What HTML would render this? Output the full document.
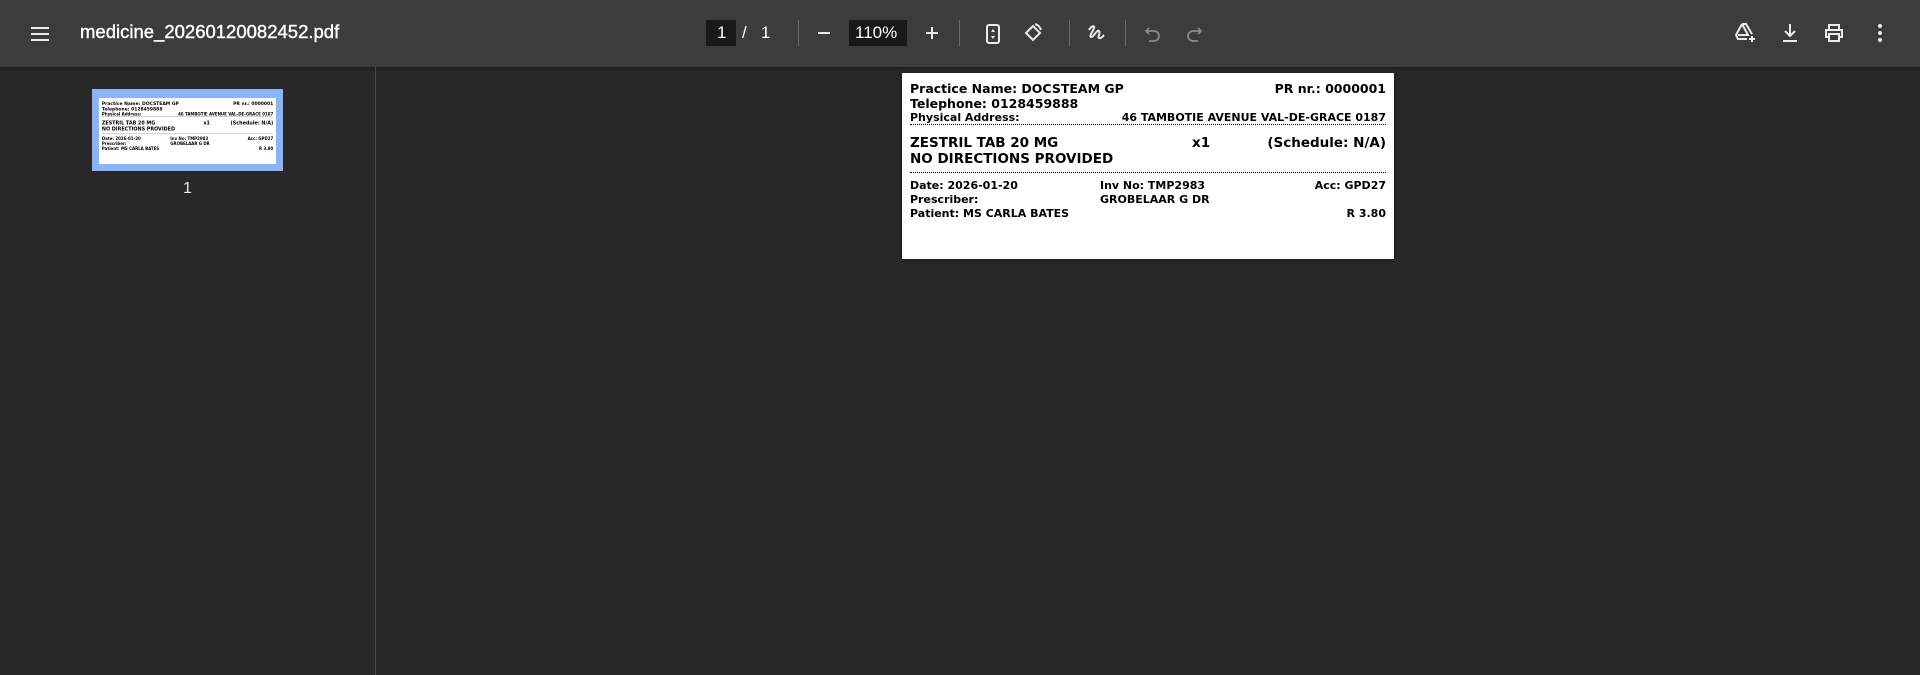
<!DOCTYPE html>
<html><head><meta charset="utf-8"><style>
*{margin:0;padding:0;box-sizing:border-box}
body{width:1920px;height:675px;background:#282828;overflow:hidden;font-family:"Liberation Sans",sans-serif;position:relative}
.tb{position:absolute;left:0;top:0;width:1920px;height:67px;background:#3c3c3c;box-shadow:0 1px 3px rgba(0,0,0,.4)}
.tb *{position:absolute}
.t{color:#fff}
.ic{stroke:#e8eaed;fill:none;stroke-width:2}
.div{width:1px;height:26px;top:20px;background:#6b6b6b}
.side{position:absolute;left:375px;top:67px;width:1px;height:608px;background:#4a4a4a}
.page{position:absolute;background:#fff;width:492px;height:186px;font-family:"DejaVu Sans",sans-serif;font-weight:bold;color:#000}
.page div{position:absolute;white-space:nowrap}
.dot{left:8px;right:8px;border-top:1.5px dotted #000;height:0}
.r{right:8px}
</style></head><body>
<div class="tb">
<svg style="left:29px;top:24px" width="22" height="20" viewBox="0 0 22 20"><path class="ic" d="M2 4h18M2 10h18M2 16h18"/></svg>
<div class="t" style="left:80px;top:21px;font-size:18.5px;-webkit-text-stroke:0.4px #fff">medicine_20260120082452.pdf</div>
<div style="left:706px;top:20px;width:30px;height:26px;background:#191919"></div>
<div class="t" style="left:717px;top:23px;font-size:17px">1</div>
<div class="t" style="left:742px;top:23px;font-size:17px">/&nbsp;&nbsp;&nbsp;1</div>
<div class="div" style="left:798px"></div>
<svg style="left:816px;top:25px" width="16" height="16"><path class="ic" d="M2 8h12"/></svg>
<div style="left:849px;top:20px;width:58px;height:26px;background:#191919"></div>
<div class="t" style="left:855px;top:23px;font-size:17px">110%</div>
<svg style="left:924px;top:25px" width="16" height="16"><path class="ic" d="M2 8h12M8 2v12"/></svg>
<div class="div" style="left:959px"></div>
<svg style="left:985px;top:23px" width="16" height="22"><rect class="ic" x="2" y="2" width="12" height="18" rx="2"/><path d="M8 6l-2 3h4zM8 16l-2-3h4z" fill="#e8eaed"/></svg>
<svg style="left:1022px;top:22px" width="22" height="22"><path class="ic" d="M11 4l-7 7 7 7 7-7zM13 2a9 9 0 0 1 6 6"/></svg>
<div class="div" style="left:1069px"></div>
<svg style="left:1086px;top:22px" width="22" height="22"><path class="ic" d="M3 8c2-4 6-5 5-2s-5 8-3 9 6-8 8-6-2 6 0 7 4-2 5-3"/></svg>
<div class="div" style="left:1125px"></div>
<svg style="left:1144px;top:25px" width="18" height="18"><path stroke="#8a8a8a" fill="none" stroke-width="1.8" d="M5 3L2 6l3 3M2 6h8a5 5 0 0 1 0 10H5"/></svg>
<svg style="left:1185px;top:25px" width="18" height="18"><path stroke="#8a8a8a" fill="none" stroke-width="1.8" d="M13 3l3 3-3 3M16 6H8a5 5 0 0 0 0 10h5"/></svg>
<svg style="left:1733px;top:21px" width="24" height="24"><path class="ic" d="M9 3h4l6 10M9 3L3 14l2 4h9M9 3l6 11H5"/><path class="ic" d="M19 15v6M16 18h6"/></svg>
<svg style="left:1780px;top:22px" width="20" height="22"><path class="ic" d="M10 2v12M5 9l5 5 5-5M3 19h14"/></svg>
<svg style="left:1823px;top:22px" width="22" height="22"><path class="ic" d="M6 7V3h10v4M6 15H3V8h16v7h-3M6 12h10v7H6z"/></svg>
<svg style="left:1876px;top:23px" width="8" height="20"><circle cx="4" cy="3" r="2" fill="#e8eaed"/><circle cx="4" cy="10" r="2" fill="#e8eaed"/><circle cx="4" cy="17" r="2" fill="#e8eaed"/></svg>
</div>
<div class="side"></div>
<div style="position:absolute;left:92px;top:89px;width:191px;height:82px;background:#8ab4f8"></div>
<div style="position:absolute;left:99px;top:98px;width:177px;height:66px;background:#fff;overflow:hidden">
 <div id="th" style="position:absolute;left:0;top:0;transform:scale(.36);transform-origin:0 0"></div>
</div>
<div style="position:absolute;left:183px;top:180px;color:#e8eaed;font-size:16px">1</div>

<div class="page" id="pg" style="left:902px;top:73px;box-shadow:0 0 4px rgba(0,0,0,.5)">
 <div style="left:8px;top:8px;font-size:12.5px">Practice Name: DOCSTEAM GP</div>
 <div class="r" style="top:8px;font-size:12.5px">PR nr.: 0000001</div>
 <div style="left:8px;top:23px;font-size:12.5px">Telephone: 0128459888</div>
 <div style="left:8px;top:38px;font-size:11px">Physical Address:</div>
 <div class="r" style="top:38px;font-size:11px">46 TAMBOTIE AVENUE VAL-DE-GRACE 0187</div>
 <div class="dot" style="top:51px"></div>
 <div style="left:8px;top:62px;font-size:13.5px">ZESTRIL TAB 20 MG</div>
 <div style="left:290px;top:62px;font-size:13.5px">x1</div>
 <div class="r" style="top:62px;font-size:13.5px">(Schedule: N/A)</div>
 <div style="left:8px;top:78px;font-size:13.5px">NO DIRECTIONS PROVIDED</div>
 <div class="dot" style="top:99px"></div>
 <div style="left:8px;top:106px;font-size:11px">Date: 2026-01-20</div>
 <div style="left:198px;top:106px;font-size:11px">Inv No: TMP2983</div>
 <div class="r" style="top:106px;font-size:11px">Acc: GPD27</div>
 <div style="left:8px;top:120px;font-size:11px">Prescriber:</div>
 <div style="left:198px;top:120px;font-size:11px">GROBELAAR G DR</div>
 <div style="left:8px;top:134px;font-size:11px">Patient: MS CARLA BATES</div>
 <div class="r" style="top:134px;font-size:11px">R 3.80</div>
</div>
<script>
var c=document.getElementById('pg').cloneNode(true);c.removeAttribute('id');c.style.left='0';c.style.top='0';c.style.boxShadow='none';document.getElementById('th').appendChild(c);
</script>
</body></html>
